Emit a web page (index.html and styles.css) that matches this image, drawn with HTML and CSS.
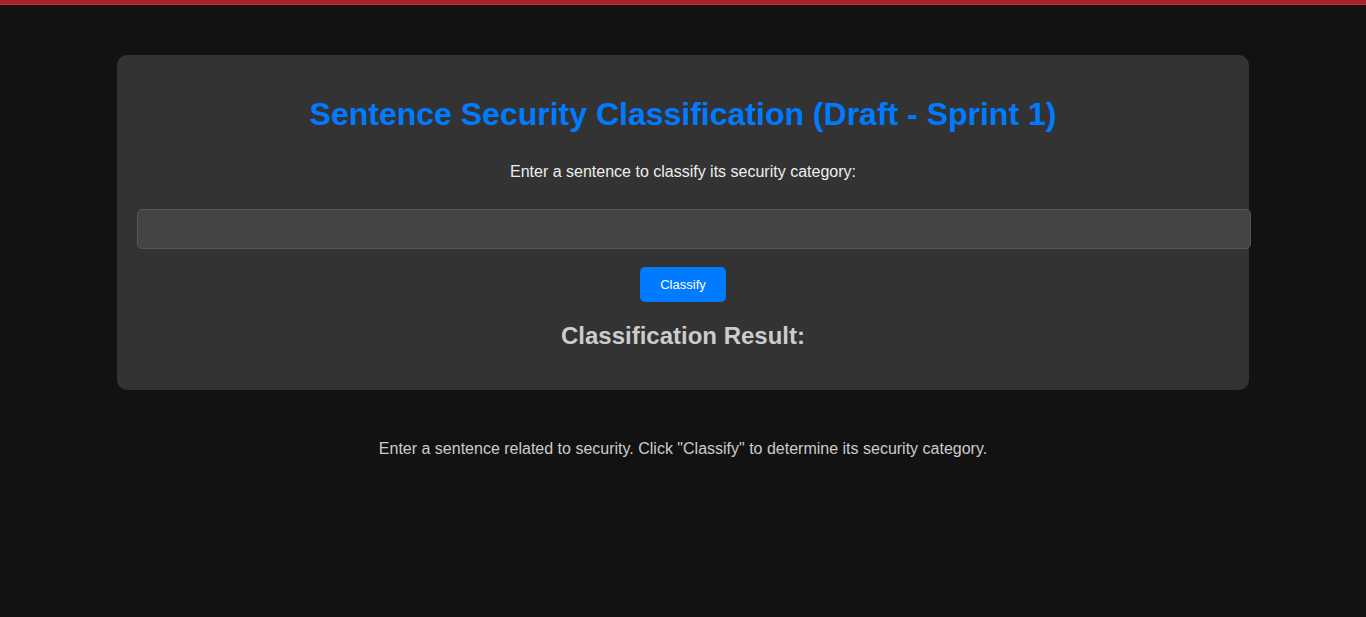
FILE: index.html
```html
<!DOCTYPE html>
<html lang="en">
<head>
<meta charset="utf-8">
<title>Sentence Security Classification</title>
<link rel="stylesheet" href="styles.css">
</head>
<body>
<div class="top-bar"></div>
<main class="container">
  <h1 class="title">Sentence Security Classification (Draft - Sprint 1)</h1>
  <p class="subtitle">Enter a sentence to classify its security category:</p>
  <input class="sentence-input" type="text">
  <div class="actions">
    <button class="classify-btn" type="button">Classify</button>
  </div>
  <h2 class="result-title">Classification Result:</h2>
</main>
<p class="footer-note">Enter a sentence related to security. Click "Classify" to determine its security category.</p>
</body>
</html>
```
FILE: styles.css
```css
html, body {
  margin: 0;
  padding: 0;
  background: #121212;
  font-family: "Liberation Sans", Arial, sans-serif;
  color: #e0e0e0;
}
body {
  min-height: 617px;
}
.top-bar {
  height: 4px;
  background: #a82024;
  border-bottom: 1px solid #c8323a;
}
.container {
  width: 80%;
  margin: 50px auto 0;
  padding: 20px;
  background: #333333;
  border-radius: 10px;
  text-align: center;
  box-sizing: content-box;
}
.title {
  font-size: 32px;
  font-weight: bold;
  color: #007bff;
  margin: 21px 0 30px;
  line-height: 37px;
}
.subtitle {
  font-size: 16px;
  margin: 0 0 28px;
  line-height: 18px;
  color: #eeeeee;
}
.sentence-input {
  display: block;
  padding: 10px;
  margin: 0;
  height: 40px;
  box-sizing: border-box;
  width: calc(100% + 22px);
  background: #444444;
  border: 1px solid #555555;
  border-radius: 5px;
  color: #eee;
  font-family: inherit;
  font-size: 16px;
}
.actions {
  margin-top: 18px;
  display: flex;
  justify-content: center;
}
.classify-btn {
  background: #007bff;
  color: #ffffff;
  border: none;
  border-radius: 5px;
  padding: 0 20px;
  height: 35px;
  line-height: 35px;
  font-family: "Liberation Sans", Arial, sans-serif;
  font-size: 13px;
  cursor: pointer;
}
.result-title {
  font-size: 24px;
  font-weight: bold;
  color: #cccccc;
  margin: 20px 0 20px;
  line-height: 28px;
}
.footer-note {
  text-align: center;
  margin: 50px 0 0;
  font-size: 16px;
  line-height: 18px;
  color: #cccccc;
}
```
